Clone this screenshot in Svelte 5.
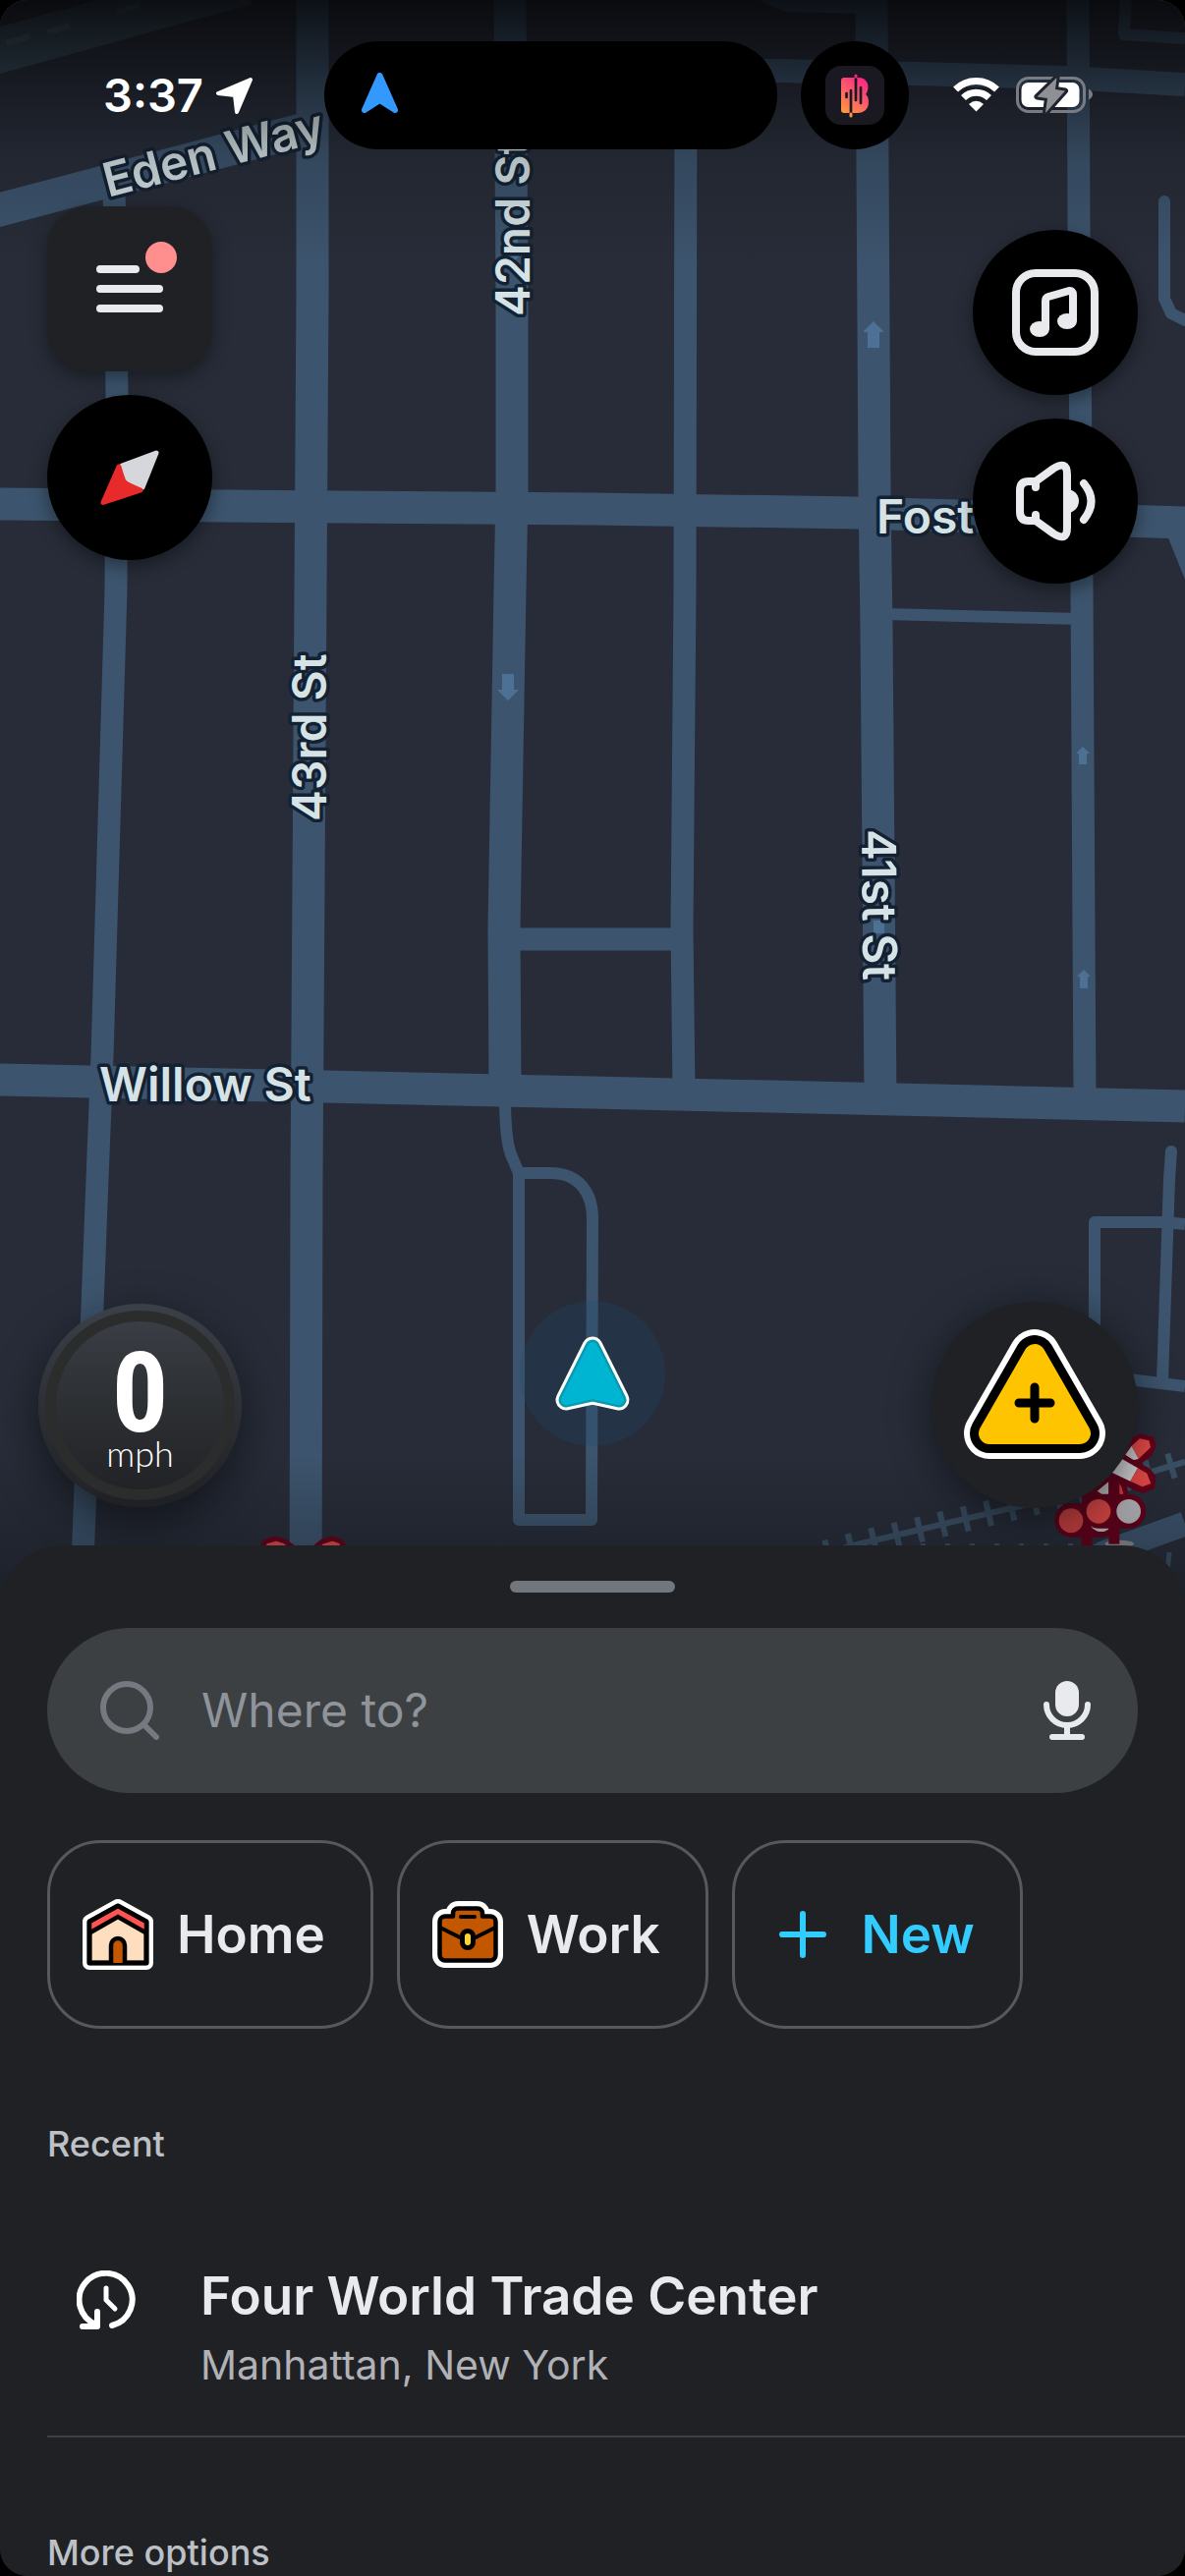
<script>
  let query = $state('');
</script>

<main class="phone">
  <section class="stage" aria-label="Map">
    <svg class="map" viewBox="0 0 1206 1643" preserveAspectRatio="xMidYMid slice" aria-hidden="true">
      <defs>
        <linearGradient id="topfade" x1="0" y1="0" x2="0" y2="1">
          <stop offset="0" stop-color="#050608" stop-opacity="0.86" />
          <stop offset="0.28" stop-color="#08090c" stop-opacity="0.55" />
          <stop offset="0.6" stop-color="#0c0e12" stop-opacity="0.18" />
          <stop offset="1" stop-color="#0c0e12" stop-opacity="0" />
        </linearGradient>
        <linearGradient id="lowfade" x1="0" y1="0" x2="0" y2="1">
          <stop offset="0" stop-color="#0c0e12" stop-opacity="0" />
          <stop offset="1" stop-color="#0c0e12" stop-opacity="0.42" />
        </linearGradient>
      </defs>
      <rect width="1206" height="1643" fill="#272c38" />

      <!-- railway -->
      <g fill="none" stroke="#3a5064">
        <path d="M840 1581L868 1573 961 1551 1038 1533 1172 1498 1206 1488" stroke-width="6" />
        <path d="M840 1581L868 1573 961 1551 1038 1533 1172 1498 1206 1488" stroke-width="26" stroke-dasharray="6 18" />
        <path d="M912 1581H1110L1206 1592" stroke-width="20" stroke-dasharray="5 20" />
      </g>

      <!-- streets -->
      <g fill="none" stroke="#3c546d">
        <path d="M-10 54L250 -18" stroke-width="46" stroke="#3a4d5c" />
        <path d="M-10 216L320 129" stroke-width="34" />
        <path d="M318 0L318 300 316 600 312 1200 311 1643" stroke-width="33" />
        <path d="M116 185L119 400 118 600 104 1075 99 1200 82 1643" stroke-width="23" />
        <path d="M519 0L521 300 521 500 519 600 513 945 514 1110" stroke-width="33" />
        <path d="M698 70L697 600 694 945 696 1110" stroke-width="23" />
        <path d="M887 0L890 500 892 640 896 1120" stroke-width="33" />
        <path d="M1097 0L1098 230 1101 600 1104 1120" stroke-width="23" />
        <path d="M690 71L791 72 930 75 1084 79 1206 86" stroke-width="24" />
        <path d="M775 -8Q792 4 804 5L880 7" stroke-width="14" />
        <path d="M1146 -4L1144 35 1206 39" stroke-width="12" stroke-linejoin="round" />
        <path d="M1185 205V304L1192 319 1206 326" stroke-width="12" stroke-linecap="round" stroke-linejoin="round" />
        <path d="M-5 513L231 515 603 518 872 522 1206 532" stroke-width="33" />
        <path d="M1194 528L1232 622" stroke-width="24" />
        <path d="M900 625L1100 630" stroke-width="12" />
        <path d="M513 956H694" stroke-width="23" />
        <path d="M-5 1099L331 1106 603 1112 911 1119 1206 1126" stroke-width="33" />
        <path d="M514 1115Q514 1160 520 1175L528 1194" stroke-width="12" />
        <path d="M528 1194H560C590 1194 603 1215 603 1240L602 1547H528Z" stroke-width="12" stroke-linejoin="round" />
        <path d="M1192 1172L1190 1200 1183 1406" stroke-width="12" stroke-linecap="round" />
        <path d="M1206 1246L1185 1244H1114V1400L1157 1405 1206 1411" stroke-width="12" stroke-linejoin="round" />
        <path d="M1120 1582L1206 1551" stroke-width="25" />
      </g>
      <path d="M6 44L30 37M48 33L71 26M119 12L142 5" stroke="#48606f" stroke-width="6" />

      <!-- one-way arrows -->
      <g fill="#4c7194">
        <path d="M889 327L900 338H895V354H883V338H878Z" />
        <path d="M517 713L506 702H511V686H523V702H528Z" />
        <path d="M521 268L510 257H515V241H527V257H532Z" />
        <path d="M1102 760L1109 767H1106V778H1098V767H1095Z" />
        <path d="M1103 987L1110 994H1107V1006H1099V994H1096Z" />
        <path d="M889 937H900V950H889Z" />
      </g>

      <!-- street names -->
      <g class="street">
        <text x="110" y="201" transform="rotate(-14.6 110 201)">Eden Way</text>
        <text x="539" y="322" transform="rotate(-90 539 322)">42nd St</text>
        <text x="332" y="836" transform="rotate(-90 332 836)">43rd St</text>
        <text x="877" y="844" transform="rotate(89.5 877 844)">41st St</text>
        <text x="892" y="543">Fost</text>
        <text x="101" y="1121">Willow St</text>
      </g>

      <!-- railroad crossing signs -->
      <g transform="translate(1040 1430) scale(.3333)">
        <ellipse cx="298" cy="424" rx="44" ry="11" fill="#8b8b8c" />
        <path fill="#66001a" d="M182 268H214V436H182ZM195 268L250 220 318 236 326 275 230 285Z" />
        <path fill="#c9c9cc" d="M230 263L265 234V272H244Z" />
        <path fill="#d94343" d="M296 238L304 250 310 272H292Z" />
        <rect x="100" y="300" width="190" height="104" rx="50" fill="#66001a" />
        <circle cx="150" cy="353" r="37" fill="#d84343" />
        <circle cx="242" cy="350" r="37" fill="#c0c0c4" />
        <path fill="#66001a" d="M265 225H298V425H265Z" />
        <path fill="#66001a" d="M320 140L332 102 362 87 402 98 410 124 396 156 350 190 295 175Z" />
        <path fill="#e84a47" d="M335 125L360 103 388 109 393 130 356 165Z" />
        <path fill="#d0d0d3" d="M335 125L356 165 340 169 316 152Z" />
        <path fill="#66001a" d="M303 148L392 195 410 220 405 255 372 269 345 262 240 208Z" />
        <path fill="#d9d9dc" d="M307 166L354 193 331 233 268 203Z" />
        <path fill="#e84a47" d="M354 193L382 209 394 240 368 250 331 233Z" />
        <rect x="185" y="273" width="193" height="104" rx="50" fill="#66001a" />
        <circle cx="234" cy="325" r="37" fill="#e84a47" />
        <circle cx="326" cy="325" r="37" fill="#b9b9be" />
      </g>
      <g fill="#e04a45" stroke="#66001a" stroke-width="5">
        <path d="M264 1582L270 1569 281 1566 290 1569 308 1582Z" />
        <path d="M312 1582L328 1569 338 1566 347 1569 354 1582Z" />
      </g>

      <rect width="1206" height="270" fill="url(#topfade)" />
      <rect y="1480" width="1206" height="163" fill="url(#lowfade)" />

      <!-- own position -->
      <circle cx="603" cy="1398" r="74" fill="#1e4a72" fill-opacity="0.24" />
      <g stroke-linejoin="round">
        <path d="M603 1371L630 1425 603 1419 576 1425Z" fill="#fff" stroke="#fff" stroke-width="21" />
        <path d="M603 1371L630 1425 603 1419 576 1425Z" fill="#0899ae" stroke="#0899ae" stroke-width="15" />
        <path d="M603 1371L630 1425 603 1419 576 1425Z" fill="#00b5d1" stroke="#00b5d1" stroke-width="10" />
      </g>
    </svg>

    <div class="hud">
      <header class="status">
        <div class="clock">
          <time>3:37</time>
          <svg width="38" height="38" viewBox="0 0 38 38" aria-hidden="true">
            <path d="M35 3L2 17 19 19 21 36Z" fill="#fff" stroke="#fff" stroke-width="4" stroke-linejoin="round" />
          </svg>
        </div>
        <div class="island">
          <svg width="37" height="41" viewBox="0 0 37 41" aria-hidden="true">
            <path d="M18.500 3L34 38 18.500 28 3 38Z" fill="#3399ff" stroke="#3399ff" stroke-width="6" stroke-linejoin="round" />
          </svg>
        </div>
        <div class="bubble">
          <svg width="60" height="60" viewBox="0 0 60 60" aria-hidden="true">
            <defs>
              <linearGradient id="music" x1="0.8" y1="0" x2="0.2" y2="1">
                <stop offset="0" stop-color="#fb2583" />
                <stop offset="0.5" stop-color="#fb5c6c" />
                <stop offset="1" stop-color="#ff9440" />
              </linearGradient>
            </defs>
            <rect width="60" height="60" rx="16" fill="#1a1922" />
            <path d="M19 12H34C41 12 45 18 43 25Q42 28 41 29Q44 31 44 37C44 44 39 48 33 48H19Q16 48 16 45V15Q16 12 19 12Z" fill="url(#music)" />
            <path d="M21.500 28V32M26 25V48M31 13V35M36 22V38" stroke="#1a1922" stroke-width="2.700" stroke-linecap="round" />
            <path d="M31 10V11" stroke="#fb2583" stroke-width="3" stroke-linecap="round" />
            <path d="M26 49V51" stroke="#ff9440" stroke-width="3" stroke-linecap="round" />
          </svg>
        </div>
        <div class="signal">
          <svg width="47" height="36" viewBox="0 0 47 36" aria-hidden="true">
            <g fill="none" stroke="#fff" stroke-width="7">
              <path d="M2.500 13A30 30 0 0 1 44.500 13" />
              <path d="M10.500 21.500A18.500 18.500 0 0 1 36.500 21.500" />
            </g>
            <path d="M16 28Q23.500 21.500 31 28L23.500 35.500Z" fill="#fff" />
          </svg>
          <svg width="78" height="38" viewBox="0 0 78 38" aria-hidden="true">
            <rect x="1.500" y="1.500" width="68" height="34" rx="11" fill="none" stroke="#797c82" stroke-width="3" />
            <rect x="5.500" y="6" width="59" height="25" rx="7" fill="#fff" />
            <path d="M74 12.500Q78 15 78 18T74 23.500Z" fill="#797c82" />
            <path d="M41.500 1L21.500 20.500 32 22 30 37 50 14.500 40 13Z" fill="#8e9096" stroke="#1f242c" stroke-width="6" stroke-linejoin="round" paint-order="stroke" />
          </svg>
        </div>
      </header>

      <div class="controls">
        <div class="column">
          <button class="key menu" aria-label="Menu">
            <svg viewBox="0 0 168 168" aria-hidden="true">
              <path d="M54 64H90M54 84H114M54 104H114" stroke="#e8eaed" stroke-width="8" stroke-linecap="round" />
              <circle cx="116" cy="52" r="16" fill="#ff8f8f" />
            </svg>
          </button>
          <button class="key" aria-label="Compass">
            <svg viewBox="0 0 168 168" aria-hidden="true">
              <path d="M111 59L76 72 80 90 97 94Z" fill="#d6d7dc" stroke="#d6d7dc" stroke-width="5" stroke-linejoin="round" />
              <path d="M73 73L57 109.500 95 97Q80 91 78 88Q76 84 73 73Z" fill="#e82a2a" stroke="#e82a2a" stroke-width="5" stroke-linejoin="round" />
            </svg>
          </button>
        </div>
        <div class="column right">
          <button class="key" aria-label="Music">
            <svg viewBox="0 0 168 168" aria-hidden="true">
              <g fill="none" stroke="#e8eaed" stroke-width="8" stroke-linejoin="round">
                <rect x="44" y="44" width="80" height="80" rx="20" />
                <path d="M74 101V72Q74 69 77 68L98 62Q102 61.500 102 66V93" />
              </g>
              <ellipse cx="68" cy="101" rx="10" ry="8" fill="#e8eaed" />
              <ellipse cx="96" cy="93" rx="10" ry="8" fill="#e8eaed" />
            </svg>
          </button>
          <button class="key" aria-label="Sound">
            <svg viewBox="0 0 168 168" aria-hidden="true">
              <g fill="none" stroke="#e8eaed" stroke-width="8" stroke-linecap="round" stroke-linejoin="round">
                <path d="M64 70V64H57Q48 64 48 73V95Q48 104 57 104H64V98" />
                <path d="M64 64L82 51Q96 42 96 57V111Q96 126 82 117L64 104" />
                <path d="M113 66Q128 84 113 103" />
              </g>
              <circle cx="96" cy="84" r="12" fill="#e8eaed" />
              <rect x="80" y="70" width="12" height="28" fill="#000" />
            </svg>
          </button>
        </div>
      </div>

      <div class="footer">
        <div class="speed">
          <div class="dial">
            <strong>0</strong>
            <span>mph</span>
          </div>
        </div>
        <button class="report" aria-label="Report">
          <svg viewBox="0 0 210 210" aria-hidden="true">
            <g stroke-linejoin="round">
              <path d="M105 54L151 134H59Z" fill="#fff" stroke="#fff" stroke-width="52" />
              <path d="M105 54L151 134H59Z" fill="#000" stroke="#000" stroke-width="40" />
              <path d="M105 54L151 134H59Z" fill="#ffc400" stroke="#ffc400" stroke-width="22" />
            </g>
            <path d="M89 103H121M105 87V119" stroke="#000" stroke-width="9" stroke-linecap="round" />
          </svg>
        </button>
      </div>
    </div>
  </section>

  <section class="sheet" aria-label="Destinations">
    <div class="grip"></div>

    <div class="search">
      <svg width="60" height="60" viewBox="0 0 60 60" aria-hidden="true">
        <g fill="none" stroke="#757980" stroke-width="6" stroke-linecap="round">
          <circle cx="27" cy="27" r="24" />
          <path d="M45 45L57 57" />
        </g>
      </svg>
      <input type="text" placeholder="Where to?" aria-label="Where to?" bind:value={query} />
      <button class="mic" aria-label="Voice search">
        <svg width="48" height="60" viewBox="0 0 48 60" aria-hidden="true">
          <rect x="12" width="24" height="36" rx="12" fill="#e8eaed" />
          <path d="M3 24A21 21 0 0 0 45 24M24 46V56M9 57H39" fill="none" stroke="#e8eaed" stroke-width="6" stroke-linecap="round" />
        </svg>
      </button>
    </div>

    <div class="chips">
      <button class="chip">
        <svg width="72" height="72" viewBox="0 0 72 72" aria-hidden="true">
          <path d="M36 7L65 23V65H7V23Z" fill="#fff" stroke="#fff" stroke-width="14" stroke-linejoin="round" />
          <path d="M36 7L65 23V65H7V23Z" fill="#ffdec0" stroke="#000" stroke-width="5" stroke-linejoin="round" />
          <path d="M36 9L63 24.500V34L36 18 9 34V24.500Z" fill="#ff5252" />
          <path d="M8 34L36 18 64 34" fill="none" stroke="#000" stroke-width="4.500" />
          <path d="M36 7L65 23V65H7V23Z" fill="none" stroke="#000" stroke-width="4.500" stroke-linejoin="round" />
          <path d="M29 65V47A7 7 0 0 1 43 47V65" fill="#c25700" stroke="#000" stroke-width="4.500" />
        </svg>
        <span>Home</span>
      </button>
      <button class="chip">
        <svg width="72" height="72" viewBox="0 0 72 72" stroke-linejoin="round" aria-hidden="true">
          <path d="M13 17.500H21V14.500A5 5 0 0 1 26 9.500H46A5 5 0 0 1 51 14.500V17.500H59A5.500 5.500 0 0 1 64.500 23V57A5.500 5.500 0 0 1 59 62.500H13A5.500 5.500 0 0 1 7.500 57V23A5.500 5.500 0 0 1 13 17.500Z" fill="#fff" stroke="#fff" stroke-width="15" />
          <path d="M13 17.500H21V14.500A5 5 0 0 1 26 9.500H46A5 5 0 0 1 51 14.500V17.500H59A5.500 5.500 0 0 1 64.500 23V57A5.500 5.500 0 0 1 59 62.500H13A5.500 5.500 0 0 1 7.500 57V23A5.500 5.500 0 0 1 13 17.500Z" fill="#c25700" stroke="#000" stroke-width="4.500" />
          <path d="M8 29L30 40M64 29L42 40M29 18H43" stroke="#000" stroke-width="4" stroke-linecap="round" />
          <rect x="30.500" y="32.500" width="11" height="17" rx="5.500" fill="#ffd42e" stroke="#000" stroke-width="5" />
        </svg>
        <span>Work</span>
      </button>
      <button class="chip new">
        <svg width="48" height="48" viewBox="0 0 48 48" aria-hidden="true">
          <path d="M3 24H45M24 3V45" stroke="#33ccff" stroke-width="6" stroke-linecap="round" />
        </svg>
        <span>New</span>
      </button>
    </div>

    <h2>Recent</h2>
    <a class="place" href="#place">
      <svg width="60" height="62" viewBox="0 0 60 62" aria-hidden="true">
        <g fill="none" stroke="#fff" stroke-width="6" stroke-linecap="round" stroke-linejoin="round">
          <path d="M20 55A27 27 0 1 1 36 56" />
          <path d="M6 57H21V42" />
          <path d="M30 18V30L39 39" stroke-width="5" />
        </g>
      </svg>
      <span class="lines">
        <span class="title">Four World Trade Center</span>
        <span class="sub">Manhattan, New York</span>
      </span>
    </a>
    <h2>More options</h2>
  </section>
</main>

<style>
  :global(body) {
    margin: 0;
    background: #000;
  }

  .phone {
    display: flex;
    flex-direction: column;
    min-height: 100vh;
    overflow: hidden;
    border-radius: 28px;
    background: #202125;
    font-family: Inter, 'Liberation Sans', sans-serif;
  }

  button {
    padding: 0;
    border: 0;
    background: none;
    font: inherit;
    color: inherit;
  }

  svg {
    display: block;
    flex: none;
  }

  .stage {
    position: relative;
    display: flex;
    flex: 1;
    background: #272c38;
  }

  .map {
    position: absolute;
    inset: 0;
    width: 100%;
    height: 100%;
  }

  .street text {
    font-size: 48px;
    font-weight: 600;
    fill: #d5e3e6;
    stroke: #142132;
    stroke-width: 7px;
    stroke-linejoin: round;
    paint-order: stroke;
  }

  .hud {
    position: relative;
    display: flex;
    flex: 1;
    flex-direction: column;
    padding: 42px 0 108px;
  }

  .status {
    display: flex;
    align-items: center;
    height: 110px;
  }

  .clock {
    box-sizing: border-box;
    display: flex;
    align-items: center;
    gap: 13px;
    width: 330px;
    padding-left: 105px;
    color: #fff;
    font-size: 47px;
    font-weight: 600;
    line-height: 56px;
  }

  .island,
  .bubble {
    display: flex;
    align-items: center;
    height: 110px;
    border-radius: 55px;
    background: #000;
  }

  .island {
    box-sizing: border-box;
    flex: 1;
    padding: 0 38px 6px;
  }

  .bubble {
    justify-content: center;
    width: 110px;
    margin-left: 24px;
  }

  .signal {
    display: flex;
    gap: 17px;
    padding: 0 94px 0 45px;
  }

  .controls {
    display: flex;
    justify-content: space-between;
    padding: 58px 48px 0;
  }

  .column {
    display: flex;
    flex-direction: column;
    gap: 24px;
  }

  .column.right {
    padding-top: 24px;
  }

  .key {
    width: 168px;
    height: 168px;
    border-radius: 50%;
    background: #000;
    box-shadow: 0 6px 18px rgba(0, 0, 0, 0.4);
  }

  .menu {
    border-radius: 42px;
    background: #202125;
  }

  .footer {
    display: flex;
    align-items: center;
    justify-content: space-between;
    margin-top: auto;
    padding: 0 48px 0 39px;
  }

  .speed {
    box-sizing: border-box;
    width: 207px;
    height: 207px;
    padding: 7px;
    border-radius: 50%;
    background: linear-gradient(rgba(60, 64, 72, 0.96), rgba(31, 32, 35, 0.96));
    box-shadow: 0 16px 44px rgba(8, 10, 14, 0.6);
  }

  .dial {
    box-sizing: border-box;
    display: flex;
    flex-direction: column;
    align-items: center;
    height: 100%;
    padding-top: 28px;
    border: 11px solid #2b2d2d;
    border-radius: 50%;
    background: linear-gradient(#3a3e45, #303337 35%, #222326);
    color: #fff;
  }

  .dial strong {
    font: 700 114px/90px 'Roboto Condensed', 'Open Sans Condensed', 'Liberation Sans Narrow', 'Liberation Sans', sans-serif;
  }

  .dial span {
    font: 300 36px/32px Lato, sans-serif;
  }

  .report {
    width: 210px;
    height: 210px;
    border-radius: 50%;
    background: #202125;
    box-shadow: 0 8px 40px rgba(8, 10, 14, 0.6);
  }

  .sheet {
    position: relative;
    display: flex;
    flex-direction: column;
    margin-top: -70px;
    padding: 36px 0 0 48px;
    border-radius: 64px 64px 0 0;
    background: #202125;
    color: #e8eaed;
  }

  .grip {
    align-self: center;
    width: 168px;
    height: 12px;
    margin-right: 48px;
    border-radius: 6px;
    background: #72767d;
  }

  .search {
    display: flex;
    align-items: center;
    height: 168px;
    margin: 36px 48px 48px 0;
    padding: 0 48px 0 54px;
    border-radius: 84px;
    background: #3c4043;
  }

  .search input {
    flex: 1;
    min-width: 0;
    margin-left: 43px;
    padding: 0;
    border: 0;
    outline: 0;
    background: none;
    color: #e8eaed;
    font: 400 48px/60px Inter, sans-serif;
  }

  .search input::placeholder {
    color: #8f939a;
    opacity: 1;
  }

  .chips {
    display: flex;
    gap: 24px;
  }

  .chip {
    box-sizing: border-box;
    display: flex;
    align-items: center;
    gap: 24px;
    height: 192px;
    padding: 0 46px 0 33px;
    border: 3px solid #57585c;
    border-radius: 54px;
    font-size: 53px;
    font-weight: 600;
    line-height: 60px;
  }

  .chip.new {
    gap: 36px;
    padding-left: 45px;
    color: #33ccff;
  }

  h2 {
    margin: 93px 0 0;
    color: #bdc1c6;
    font-size: 36px;
    font-weight: 500;
    line-height: 48px;
  }

  .place {
    display: flex;
    gap: 66px;
    margin-top: 101px;
    padding: 0 0 48px 30px;
    border-bottom: 2px solid #3c4043;
    color: inherit;
    text-decoration: none;
  }

  .place svg {
    margin-top: 4px;
  }

  .lines {
    display: flex;
    flex-direction: column;
    gap: 16px;
  }

  .title {
    font-size: 53px;
    font-weight: 600;
    line-height: 60px;
  }

  .sub {
    color: #b0b2b7;
    font-size: 41px;
    line-height: 48px;
  }
</style>
